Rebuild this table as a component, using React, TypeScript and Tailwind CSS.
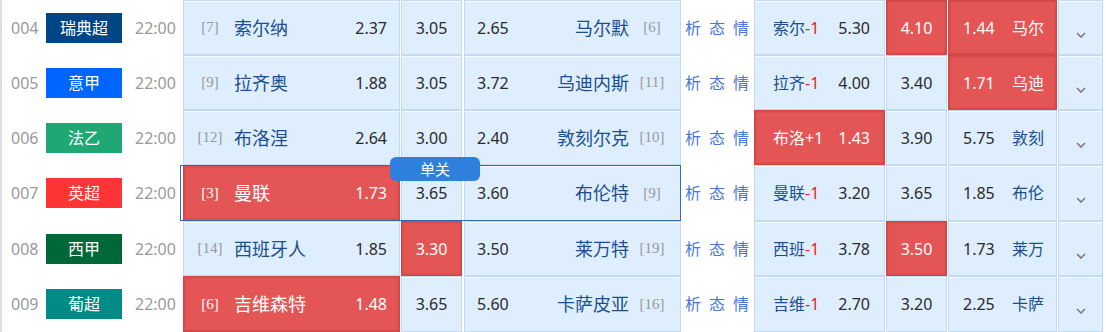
import React from 'react';

type Row = {
  no: string;
  league: string;
  lc: string;
  hr: string;
  home: string;
  h: string;
  d: string;
  a: string;
  away: string;
  ar: string;
  hcName: string;
  hc: string;
  hh: string;
  hd: string;
  ha: string;
  hcAway: string;
  red: string[];
  hgt: string;
  selected?: boolean;
};

const rows: Row[] = [
  { no: '004', league: '瑞典超', lc: 'bg-[#004586]', hr: '[7]', home: '索尔纳', h: '2.37', d: '3.05', a: '2.65', away: '马尔默', ar: '[6]', hcName: '索尔', hc: '-1', hh: '5.30', hd: '4.10', ha: '1.44', hcAway: '马尔', red: ['hd', 'ha'], hgt: 'h-[55px]' },
  { no: '005', league: '意甲', lc: 'bg-[#0066ff]', hr: '[9]', home: '拉齐奥', h: '1.88', d: '3.05', a: '3.72', away: '乌迪内斯', ar: '[11]', hcName: '拉齐', hc: '-1', hh: '4.00', hd: '3.40', ha: '1.71', hcAway: '乌迪', red: ['ha'], hgt: 'h-[55px]' },
  { no: '006', league: '法乙', lc: 'bg-[#1fa774]', hr: '[12]', home: '布洛涅', h: '2.64', d: '3.00', a: '2.40', away: '敦刻尔克', ar: '[10]', hcName: '布洛', hc: '+1', hh: '1.43', hd: '3.90', ha: '5.75', hcAway: '敦刻', red: ['hh'], hgt: 'h-[55px]' },
  { no: '007', league: '英超', lc: 'bg-[#ff3535]', hr: '[3]', home: '曼联', h: '1.73', d: '3.65', a: '3.60', away: '布伦特', ar: '[9]', hcName: '曼联', hc: '-1', hh: '3.20', hd: '3.65', ha: '1.85', hcAway: '布伦', red: ['h'], hgt: 'h-[56px]', selected: true },
  { no: '008', league: '西甲', lc: 'bg-[#006837]', hr: '[14]', home: '西班牙人', h: '1.85', d: '3.30', a: '3.50', away: '莱万特', ar: '[19]', hcName: '西班', hc: '-1', hh: '3.78', hd: '3.50', ha: '1.73', hcAway: '莱万', red: ['d', 'hd'], hgt: 'h-[55px]' },
  { no: '009', league: '葡超', lc: 'bg-[#008b86]', hr: '[6]', home: '吉维森特', h: '1.48', d: '3.65', a: '5.60', away: '卡萨皮亚', ar: '[16]', hcName: '吉维', hc: '-1', hh: '2.70', hd: '3.20', ha: '2.25', hcAway: '卡萨', red: ['h'], hgt: 'h-[56px]' },
];

function cellCls(red: boolean) {
  return red
    ? 'bg-[#e45555] border border-[#d04545] text-white shadow-[inset_0_0_3px_rgba(150,20,20,0.35)]'
    : 'bg-[#deeefd] border border-[#c3daf3] text-[#2b2b2b] shadow-[inset_0_1px_0_#f6fbff]';
}

function Chevron() {
  return (
    <svg width="10" height="6" viewBox="0 0 10 6" fill="none">
      <path d="M1 1 L5 5 L9 1" stroke="#7a7a7a" strokeWidth="1.6" />
    </svg>
  );
}

function MatchRow({ r }: { r: Row }) {
  const isRed = (k: string) => r.red.includes(k);
  return (
    <div className={`relative flex items-stretch ${r.hgt}`}>
      {/* left info */}
      <div className="w-[183px] flex items-center border-l-2 border-[#dddddd] pl-[9px] bg-white">
        <span className="w-[35px] text-[16px] text-[#9a9a9a]">{r.no}</span>
        <span className={`w-[76px] h-[30px] flex items-center justify-center text-[16px] text-white ${r.lc}`}>{r.league}</span>
        <span className="ml-[13px] text-[16px] text-[#9a9a9a]">{r.time ?? '22:00'}</span>
      </div>

      {/* home */}
      <div className={`w-[217px] flex items-center pl-[10px] pr-[12px] ${cellCls(isRed('h'))}`}>
        <span className={`w-[32px] text-center font-['Liberation_Serif',serif] text-[15px] ${isRed('h') ? 'text-white' : 'text-[#999999]'}`}>{r.hr}</span>
        <span className={`ml-[8px] text-[18px] ${isRed('h') ? 'text-white' : 'text-[#1b4f8f]'}`}>{r.home}</span>
        <span className="ml-auto text-[16px]">{r.h}</span>
      </div>
      <div className="w-[1px]" />
      {/* draw */}
      <div className={`w-[61px] flex items-center justify-center text-[16px] ${cellCls(isRed('d'))}`}>{r.d}</div>
      <div className="w-[2px]" />
      {/* away */}
      <div className={`w-[217px] flex items-center pl-[12px] pr-[12px] ${cellCls(isRed('a'))}`}>
        <span className="text-[16px]">{r.a}</span>
        <span className="ml-auto text-[18px] text-[#1b4f8f]">{r.away}</span>
        <span className="ml-[7px] w-[32px] text-center font-['Liberation_Serif',serif] text-[15px] text-[#999999]">{r.ar}</span>
      </div>

      {/* links */}
      <div className="w-[73px] flex items-center pl-[4px] gap-[8px] text-[16px] text-[#4b78d8] bg-white">
        <span>析</span>
        <span>态</span>
        <span>情</span>
      </div>

      {/* handicap home */}
      <div className={`w-[131px] flex items-center justify-between pl-[18px] pr-[14px] ${cellCls(isRed('hh'))}`}>
        <span className="text-[16px]">
          <span className={isRed('hh') ? 'text-white' : 'text-[#1b4f8f]'}>{r.hcName}</span>
          <span className={isRed('hh') ? 'text-white' : 'text-[#e8221a]'}>{r.hc}</span>
        </span>
        <span className="text-[16px]">{r.hh}</span>
      </div>
      <div className="w-[1px]" />
      <div className={`w-[61px] flex items-center justify-center text-[16px] ${cellCls(isRed('hd'))}`}>{r.hd}</div>
      <div className="w-[1px]" />
      <div className={`w-[109px] flex items-center justify-between pl-[14px] pr-[12px] ${cellCls(isRed('ha'))}`}>
        <span className="text-[16px]">{r.ha}</span>
        <span className={`text-[16px] ${isRed('ha') ? 'text-white' : 'text-[#1b4f8f]'}`}>{r.hcAway}</span>
      </div>
      <div className="w-[1px]" />
      <div className={`w-[45px] flex items-center justify-center pt-[14px] ${cellCls(false)}`}>
        <Chevron />
      </div>

      {r.selected && (
        <>
          <div className="absolute left-[180px] top-0 w-[501px] h-full border border-[#2e6db4] pointer-events-none" />
          <div className="absolute left-[390px] top-[-8px] w-[90px] h-[24px] rounded-[6px] bg-[#2f7fdc] text-white text-[15px] flex items-center justify-center z-10">
            单关
          </div>
        </>
      )}
    </div>
  );
}

export default function App() {
  return (
    <div className="w-[1106px] h-[332px] overflow-hidden bg-white font-['Noto_Sans','Noto_Sans_CJK_SC',sans-serif] leading-none">
      {rows.map((r) => (
        <MatchRow key={r.no} r={r} />
      ))}
    </div>
  );
}
